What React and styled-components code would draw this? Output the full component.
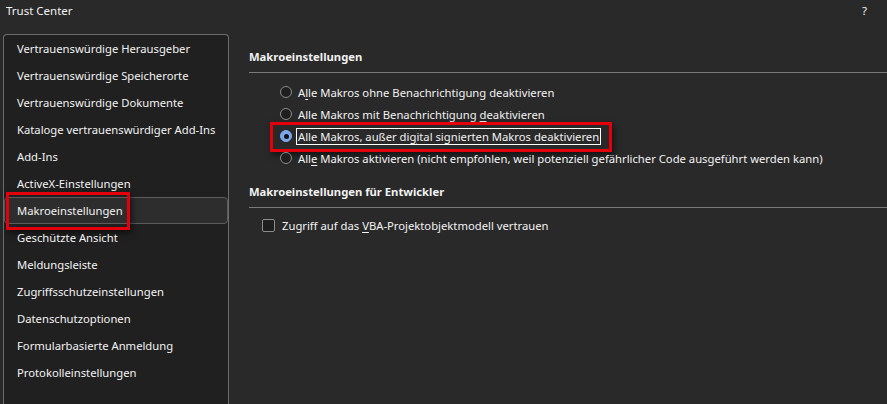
import React from 'react';
import styled, {createGlobalStyle} from 'styled-components';

const GlobalStyle = createGlobalStyle`
  html, body {
    margin: 0;
    padding: 0;
    background: #292929;
  }
  body {
    font-family: "Noto Sans", "Open Sans", sans-serif;
    font-size: 11.25px;
    color: #f2f2f2;
  }
`;

const Dialog = styled.div`
  width: 887px;
  height: 404px;
  display: flex;
  flex-direction: column;
  background: #292929;
  overflow: hidden;
`;

const TitleBar = styled.div`
  height: 34px;
  display: flex;
  justify-content: space-between;
  align-items: flex-start;
  padding: 3px 20px 0 6px;
  box-sizing: border-box;
  line-height: 16px;
  font-size: 11.5px;
`;

const Body = styled.div`
  flex: 1;
  display: flex;
  min-height: 0;
`;

const Nav = styled.ul`
  list-style: none;
  margin: 0 0 0 3px;
  padding: 0;
  width: 226px;
  flex-shrink: 0;
  box-sizing: border-box;
  background: #202020;
  border: 1px solid #6c6c6c;
  border-bottom: none;
  border-radius: 4px 4px 0 0;
`;

const NavItem = styled.li`
  position: relative;
  height: 27px;
  display: flex;
  align-items: center;
  box-sizing: border-box;
  padding-left: ${p => (p.$active ? '12px' : '13px')};
  border: ${p => (p.$active ? '1px solid #5c5c5c' : 'none')};
  border-radius: 4px;
  background: ${p => (p.$active ? '#2d2d2d' : 'transparent')};
  white-space: nowrap;
`;

const Highlight = styled.div`
  position: absolute;
  box-sizing: border-box;
  border: 3px solid #e3000b;
  box-shadow: 2px 3px 6px rgba(0, 0, 0, 0.55);
  pointer-events: none;
`;

const Content = styled.div`
  flex: 1;
  padding: 15px 0 0 20px;
  display: flex;
  flex-direction: column;
`;

const SectionTitle = styled.div`
  font-weight: 700;
  line-height: 16px;
  padding-bottom: 7px;
  border-bottom: 1px solid #7a7a7a;
  margin-top: ${p => p.$gap || 0}px;
`;

const OptionList = styled.div`
  display: flex;
  flex-direction: column;
  padding: 8px 0 0 31px;
`;

const OptionRow = styled.label`
  position: relative;
  height: 22px;
  display: flex;
  align-items: center;
  gap: 6px;
  white-space: nowrap;
`;

const Radio = styled.span`
  width: 12px;
  height: 12px;
  box-sizing: border-box;
  border-radius: 50%;
  flex-shrink: 0;
  border: 1px solid ${p => (p.$checked ? '#7aa7ee' : '#8c8c8c')};
  background: ${p => (p.$checked ? '#7aa7ee' : '#1e1e1e')};
  display: flex;
  align-items: center;
  justify-content: center;
  &::after {
    content: '';
    display: ${p => (p.$checked ? 'block' : 'none')};
    width: 5px;
    height: 5px;
    border-radius: 50%;
    background: #111;
  }
`;

const OptionText = styled.span`
  padding: 0 1px;
  line-height: 15px;
  border: 1px solid ${p => (p.$focused ? '#ffffff' : 'transparent')};
  margin-left: -2px;
`;

const Key = styled.span`
  text-decoration: underline;
  text-underline-offset: 2px;
`;

const CheckRow = styled.label`
  display: flex;
  align-items: center;
  gap: 7px;
  height: 22px;
  margin: 6px 0 0 13px;
`;

const CheckBox = styled.span`
  width: 13px;
  height: 13px;
  box-sizing: border-box;
  border: 1px solid #8c8c8c;
  border-radius: 2px;
  background: #1e1e1e;
`;

const navItems = [
  'Vertrauenswürdige Herausgeber',
  'Vertrauenswürdige Speicherorte',
  'Vertrauenswürdige Dokumente',
  'Kataloge vertrauenswürdiger Add-Ins',
  'Add-Ins',
  'ActiveX-Einstellungen',
  'Makroeinstellungen',
  'Geschützte Ansicht',
  'Meldungsleiste',
  'Zugriffsschutzeinstellungen',
  'Datenschutzoptionen',
  'Formularbasierte Anmeldung',
  'Protokolleinstellungen',
];

const App = () => {
  return (
    <>
      <GlobalStyle />
      <Dialog>
        <TitleBar>
          <span>Trust Center</span>
          <span>?</span>
        </TitleBar>
        <Body>
          <Nav>
            {navItems.map(item => {
              const active = item === 'Makroeinstellungen';
              return (
                <NavItem key={item} $active={active}>
                  {item}
                  {active && (
                    <Highlight style={{left: 1, top: -6, width: 124, height: 38}} />
                  )}
                </NavItem>
              );
            })}
          </Nav>
          <Content>
            <SectionTitle>Makroeinstellungen</SectionTitle>
            <OptionList>
              <OptionRow>
                <Radio />
                <OptionText>A<Key>l</Key>le Makros ohne Benachrichtigung deaktivieren</OptionText>
              </OptionRow>
              <OptionRow>
                <Radio />
                <OptionText>Alle Makros mit Benachrichtigung <Key>d</Key>eaktivieren</OptionText>
              </OptionRow>
              <OptionRow>
                <Radio $checked />
                <OptionText $focused>Alle Makros, außer di<Key>g</Key>ital signierten Makros deaktivieren</OptionText>
                <Highlight style={{left: -10, top: -3, width: 342, height: 30}} />
              </OptionRow>
              <OptionRow>
                <Radio />
                <OptionText>All<Key>e</Key> Makros aktivieren (nicht empfohlen, weil potenziell gefährlicher Code ausgeführt werden kann)</OptionText>
              </OptionRow>
            </OptionList>
            <SectionTitle $gap={15}>Makroeinstellungen für Entwickler</SectionTitle>
            <CheckRow>
              <CheckBox />
              <span>Zugriff auf das <Key>V</Key>BA-Projektobjektmodell vertrauen</span>
            </CheckRow>
          </Content>
        </Body>
      </Dialog>
    </>
  );
};

export default App;
